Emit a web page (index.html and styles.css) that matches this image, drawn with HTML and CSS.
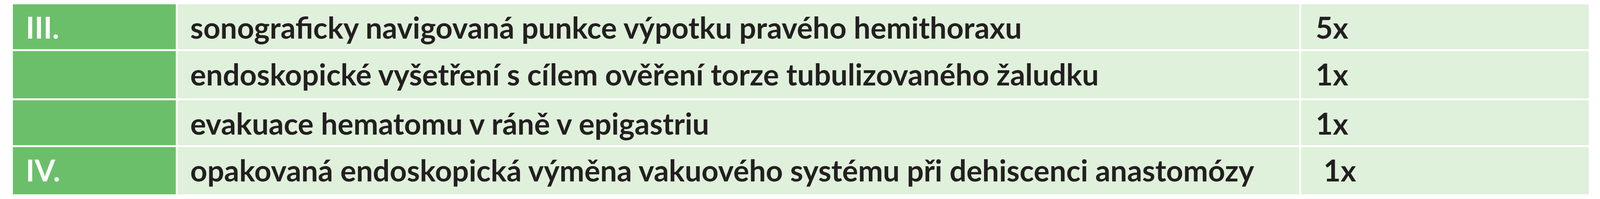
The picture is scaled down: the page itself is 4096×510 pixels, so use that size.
FILE: index.html
```html
<!DOCTYPE html>
<html lang="cs">
<head>
<meta charset="utf-8">
<title>Tabulka</title>
<link rel="stylesheet" href="styles.css">
</head>
<body>
<div class="table">
  <div class="cell grade">III.</div>
  <div class="cell desc">sonograficky navigovaná punkce výpotku pravého hemithoraxu</div>
  <div class="cell count">5x</div>

  <div class="cell grade"></div>
  <div class="cell desc">endoskopické vyšetření s cílem ověření torze tubulizovaného žaludku</div>
  <div class="cell count">1x</div>

  <div class="cell grade"></div>
  <div class="cell desc">evakuace hematomu v ráně v epigastriu</div>
  <div class="cell count">1x</div>

  <div class="cell grade">IV.</div>
  <div class="cell desc">opakovaná endoskopická výměna vakuového systému při dehiscenci anastomózy</div>
  <div class="cell count count-indent">1x</div>
</div>
</body>
</html>
```

FILE: styles.css
```css
html, body {
  margin: 0;
  padding: 0;
  background: #ffffff;
}

.table {
  display: grid;
  grid-template-columns: 417px 2871px 736px;
  grid-template-rows: 115px 121px 115px 121px;
  column-gap: 5px;
  row-gap: 5px;
  padding: 11px 0 0 33px;
  font-family: "Lato", "Noto Sans", sans-serif;
  font-weight: 700;
  font-size: 76px;
  line-height: 76px;
  color: #231f20;
}

.cell {
  background: #dff0db;
  padding-top: 21px;
  white-space: nowrap;
  overflow: hidden;
}

.grade {
  background: #6bbf6a;
  color: #ffffff;
  padding-left: 33px;
}

.desc {
  padding-left: 32px;
}

.count {
  padding-left: 37px;
}

.count-indent {
  padding-left: 57px;
}
```
